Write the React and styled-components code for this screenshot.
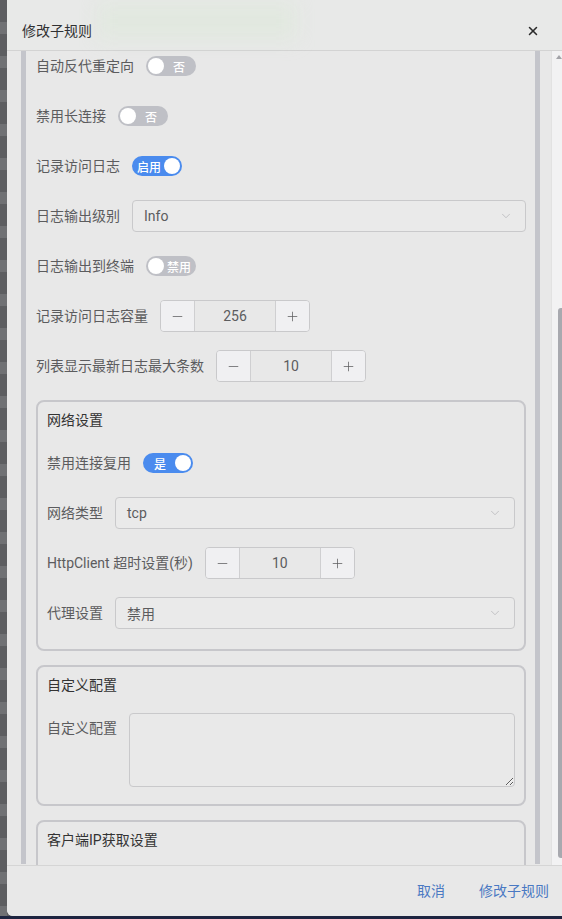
import React from 'react';
import styled, { createGlobalStyle } from 'styled-components';
import { X, ChevronDown, Minus, Plus } from 'lucide-react';

const GlobalStyle = createGlobalStyle`
  html, body {
    margin: 0;
    padding: 0;
    overflow: hidden;
  }
  body {
    font-family: Roboto, "Noto Sans CJK SC", sans-serif;
    background: #1d2440;
  }
`;

// whole window: dimmed page strip on the left, dialog on the right
const Page = styled.div`
  width: 562px;
  height: 919px;
  box-sizing: border-box;
  padding-bottom: 3px;
  display: flex;
  flex-direction: column;
  background: #1d2440;
`;

const Stage = styled.div`
  flex: 1;
  display: flex;
  min-height: 0;
  background: #5f6063;
`;

const Backdrop = styled.div`
  width: 7px;
  background: repeating-linear-gradient(
    180deg,
    #5d5e61 0px,
    #5d5e61 22px,
    #707174 22px,
    #707174 34px
  );
`;

const Dialog = styled.div`
  position: relative;
  flex: 1;
  display: flex;
  flex-direction: column;
  background: #e8e8e8;
  border-bottom-left-radius: 6px;
  overflow: hidden;
`;

// faint blurred toast showing through the header
const Toast = styled.div`
  position: absolute;
  left: 90px;
  top: 2px;
  width: 200px;
  height: 38px;
  background: rgba(205, 232, 196, 0.22);
  filter: blur(10px);
  pointer-events: none;
`;

const Header = styled.div`
  height: 51px;
  box-sizing: border-box;
  display: flex;
  align-items: flex-end;
  justify-content: space-between;
  padding: 0 22px 9px 15px;
  border-bottom: 1px solid #d3d3d3;
  background: #e8e9e8;
`;

const Title = styled.span`
  font-size: 14px;
  line-height: 20px;
  color: #303133;
`;

const Close = styled.span`
  display: flex;
  align-items: center;
  height: 20px;
  color: #2b2b2b;
`;

const Body = styled.div`
  flex: 1;
  display: flex;
  min-height: 0;
`;

const Scroller = styled.div`
  flex: 1;
  overflow: hidden;
  padding: 0 11px 0 14px;
`;

const Card = styled.div`
  height: 100%;
  box-sizing: border-box;
  margin-top: -1px;
  border-left: 5px solid #c4c5cb;
  border-right: 5px solid #c4c5cb;
  padding: 0 9px 0 10px;
`;

const Scrollbar = styled.div`
  width: 11px;
  display: flex;
  flex-direction: column;
  align-items: flex-end;
  background: #f2f2f3;
  border-left: 1px solid #e2e2e2;
  box-sizing: border-box;
`;

const Arrow = styled.div`
  margin-top: 4px;
  width: 0;
  height: 0;
  border-left: 3px solid transparent;
  border-right: 3px solid transparent;
  border-bottom: 4px solid #a3a3a8;
`;

const Thumb = styled.div`
  margin-top: auto;
  margin-bottom: 7px;
  width: 4px;
  height: 550px;
  border-radius: 3px 0 0 3px;
  background: #a8a9af;
`;

const Row = styled.div`
  display: flex;
  align-items: ${p => (p.$top ? 'flex-start' : 'center')};
  min-height: 32px;
  margin-bottom: ${p => (p.$top ? '15px' : '18px')};
`;

const Label = styled.label`
  flex-shrink: 0;
  padding-right: 12px;
  font-size: 14px;
  line-height: 32px;
  color: #5c5c5e;
  white-space: nowrap;
`;

const SwitchTrack = styled.span`
  display: flex;
  flex-direction: ${p => (p.$on ? 'row' : 'row-reverse')};
  align-items: center;
  width: 50px;
  height: 20px;
  box-sizing: border-box;
  padding: 0 2px;
  border-radius: 10px;
  background: ${p => (p.$on ? '#4a8bee' : '#bfc0c6')};
`;

const SwitchText = styled.span`
  flex: 1;
  text-align: center;
  font-size: 12px;
  font-weight: 500;
  color: #fff;
`;

const Knob = styled.span`
  width: 16px;
  height: 16px;
  border-radius: 50%;
  background: #fff;
`;

const Select = styled.div`
  flex: 1;
  height: 32px;
  box-sizing: border-box;
  display: flex;
  align-items: center;
  justify-content: space-between;
  padding: 0 12px 0 11px;
  border: 1px solid #c9c9cb;
  border-radius: 4px;
  background: #eaeaea;
  font-size: 14px;
  color: #5c5c5e;
`;

const Stepper = styled.div`
  display: flex;
  width: 150px;
  height: 32px;
  box-sizing: border-box;
  border: 1px solid #c9c9cb;
  border-radius: 4px;
  overflow: hidden;
`;

const StepButton = styled.span`
  width: 33px;
  display: flex;
  align-items: center;
  justify-content: center;
  background: #f0f0f2;
  color: #5c5c5e;
  border-${p => (p.$side === 'left' ? 'right' : 'left')}: 1px solid #cfcfd1;
`;

const StepValue = styled.span`
  flex: 1;
  display: flex;
  align-items: center;
  justify-content: center;
  font-size: 14px;
  color: #5c5c5e;
  background: #e8e8e8;
`;

const Fieldset = styled.div`
  margin: 2px 0 14px;
  padding: 0 9px 2px;
  border: 2px solid #c7c7cb;
  border-radius: 8px;
  min-height: ${p => (p.$cut ? '120px' : 'auto')};
`;

const Legend = styled.div`
  padding-top: 8px;
  margin-bottom: 17px;
  font-size: 14px;
  line-height: 20px;
  color: #333;
`;

const TextArea = styled.textarea`
  flex: 1;
  height: 74px;
  margin-top: 1px;
  box-sizing: border-box;
  border: 1px solid #c9c9cb;
  border-radius: 4px;
  background: #e9e9e9;
  resize: vertical;
  outline: none;
  font-family: inherit;
`;

const Footer = styled.div`
  height: 51px;
  box-sizing: border-box;
  display: flex;
  align-items: center;
  justify-content: flex-end;
  gap: 34px;
  padding: 0 13px 2px 0;
  border-top: 1px solid #d5d5d5;
  background: #e8e8e8;
`;

const TextButton = styled.button`
  border: none;
  background: none;
  padding: 0;
  font-family: inherit;
  font-size: 14px;
  color: #4a79c3;
  cursor: pointer;
`;

const Switch = ({ on, text }) => (
  <SwitchTrack $on={on}>
    <SwitchText>{text}</SwitchText>
    <Knob />
  </SwitchTrack>
);

const SelectBox = ({ value }) => (
  <Select>
    <span>{value}</span>
    <ChevronDown size={14} strokeWidth={1.4} color="#b9b9bb" />
  </Select>
);

const NumberInput = ({ value }) => (
  <Stepper>
    <StepButton $side="left">
      <Minus size={15} strokeWidth={1.2} />
    </StepButton>
    <StepValue>{value}</StepValue>
    <StepButton $side="right">
      <Plus size={15} strokeWidth={1.2} />
    </StepButton>
  </Stepper>
);

const Field = ({ label, children, top }) => (
  <Row $top={top}>
    <Label>{label}</Label>
    {children}
  </Row>
);

export default function App() {
  return (
    <Page>
      <GlobalStyle />
      <Stage>
        <Backdrop />
        <Dialog>
          <Toast />
          <Header>
            <Title>修改子规则</Title>
            <Close>
              <X size={14} strokeWidth={2.6} />
            </Close>
          </Header>
          <Body>
            <Scroller>
              <Card>
                <Field label="自动反代重定向">
                  <Switch text="否" />
                </Field>
                <Field label="禁用长连接">
                  <Switch text="否" />
                </Field>
                <Field label="记录访问日志">
                  <Switch on text="启用" />
                </Field>
                <Field label="日志输出级别">
                  <SelectBox value="Info" />
                </Field>
                <Field label="日志输出到终端">
                  <Switch text="禁用" />
                </Field>
                <Field label="记录访问日志容量">
                  <NumberInput value="256" />
                </Field>
                <Field label="列表显示最新日志最大条数">
                  <NumberInput value="10" />
                </Field>

                <Fieldset>
                  <Legend>网络设置</Legend>
                  <Field label="禁用连接复用">
                    <Switch on text="是" />
                  </Field>
                  <Field label="网络类型">
                    <SelectBox value="tcp" />
                  </Field>
                  <Field label="HttpClient 超时设置(秒)">
                    <NumberInput value="10" />
                  </Field>
                  <Field label="代理设置">
                    <SelectBox value="禁用" />
                  </Field>
                </Fieldset>

                <Fieldset>
                  <Legend>自定义配置</Legend>
                  <Field label="自定义配置" top>
                    <TextArea />
                  </Field>
                </Fieldset>

                <Fieldset $cut>
                  <Legend>客户端IP获取设置</Legend>
                </Fieldset>
              </Card>
            </Scroller>
            <Scrollbar>
              <Arrow />
              <Thumb />
            </Scrollbar>
          </Body>
          <Footer>
            <TextButton>取消</TextButton>
            <TextButton>修改子规则</TextButton>
          </Footer>
        </Dialog>
      </Stage>
    </Page>
  );
}
